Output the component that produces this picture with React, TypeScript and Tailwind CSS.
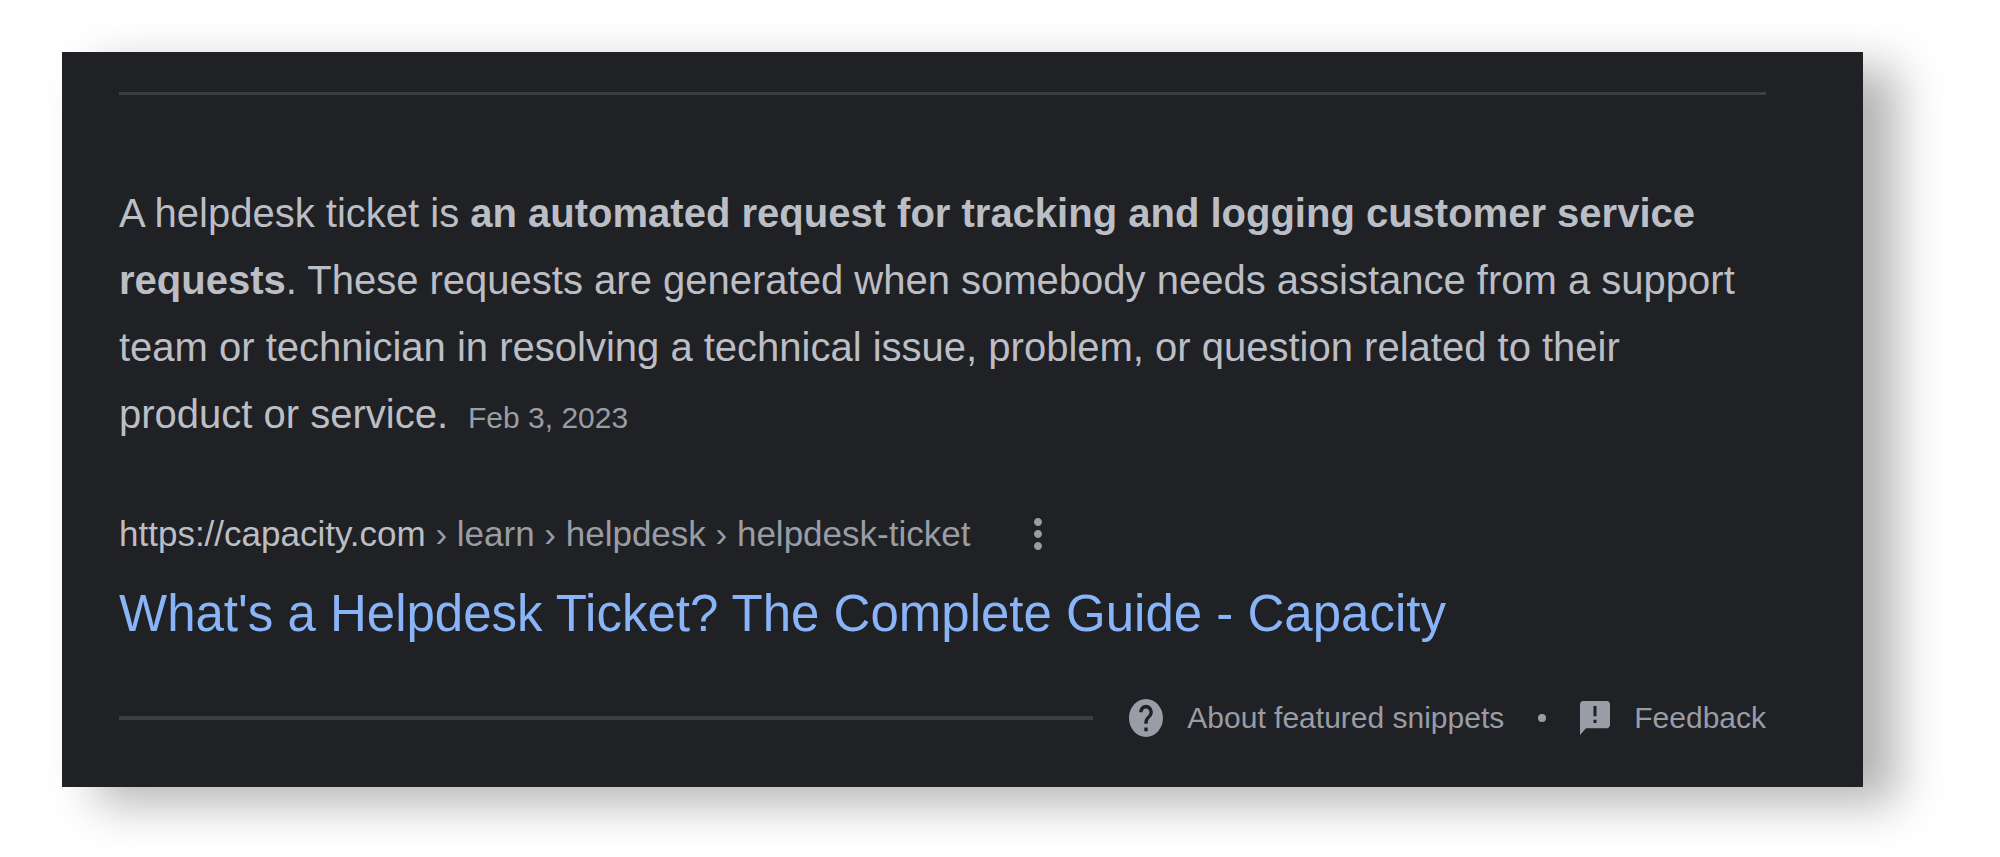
import { MdMoreVert } from "react-icons/md";

function HelpIcon() {
  return (
    <svg viewBox="2 2 20 20" preserveAspectRatio="none" fill="currentColor" className="h-[38px] w-[34px]" aria-hidden="true">
      <path d="M12 2C6.48 2 2 6.48 2 12s4.48 10 10 10 10-4.48 10-10S17.52 2 12 2zm1 17h-2v-2h2v2zm2.07-7.75l-.9.92C13.45 12.9 13 13.5 13 15h-2v-.5c0-1.1.45-2.1 1.17-2.83l1.24-1.26c.37-.36.59-.86.59-1.41 0-1.1-.9-2-2-2s-2 .9-2 2H8c0-2.21 1.79-4 4-4s4 1.79 4 4c0 .88-.36 1.68-.93 2.25z" />
    </svg>
  );
}

function FeedbackIcon() {
  return (
    <svg viewBox="2 2 20 20" preserveAspectRatio="none" fill="currentColor" className="h-[34px] w-[30px]" aria-hidden="true">
      <path d="M20 2H4c-1.1 0-1.99.9-1.99 2L2 22l4-4h14c1.1 0 2-.9 2-2V4c0-1.1-.9-2-2-2zm-7 9h-2V5h2v6zm0 4h-2v-2h2v2z" />
    </svg>
  );
}

export default function App() {
  return (
    <main className="min-h-screen bg-white pt-[52px] pr-[137px] pb-[70px] pl-[62px] font-['Liberation_Sans',Arial,sans-serif]">
      <article className="bg-[#202124] pt-10 pr-[97px] pb-[45px] pl-[57px] text-[#bcbec6] shadow-[34px_16px_44px_rgba(0,0,0,0.3)]">
        <hr className="border-t-3 border-[#3a3f42]" />
        <p className="mt-[85px] pr-3 text-[40px] leading-[67px]">
          A helpdesk ticket is <b>an automated request for tracking and logging customer service requests</b>. These
          requests are generated when somebody needs assistance from a support team or technician in resolving a
          technical issue, problem, or question related to their product or service.
          <time className="ml-5 text-[30px] leading-none text-[#999da6]">Feb 3, 2023</time>
        </p>
        <div className="mt-[62px] flex items-center text-[35px] leading-[48px] text-[#999da6]">
          <cite className="not-italic">
            <span className="text-[#bcbec6]">https://capacity.com</span> › learn › helpdesk › helpdesk-ticket
          </cite>
          <button aria-label="About this result" className="ml-11">
            <MdMoreVert className="size-12" />
          </button>
        </div>
        <h3 className="mt-6 text-[51px] leading-[64px] text-[#8ab4f8]">
          <a href="#guide">What's a Helpdesk Ticket? The Complete Guide - Capacity</a>
        </h3>
        <footer className="mt-12 flex items-center text-[30px] leading-[48px] text-[#999da6]">
          <hr className="grow border-t-4 border-[#3a3f42]" />
          <a href="#about" className="ml-9 flex items-center gap-6">
            <HelpIcon />
            About featured snippets
          </a>
          <span className="mx-[34px] size-2 rounded-full bg-current" />
          <a href="#feedback" className="flex items-center gap-6">
            <FeedbackIcon />
            Feedback
          </a>
        </footer>
      </article>
    </main>
  );
}
